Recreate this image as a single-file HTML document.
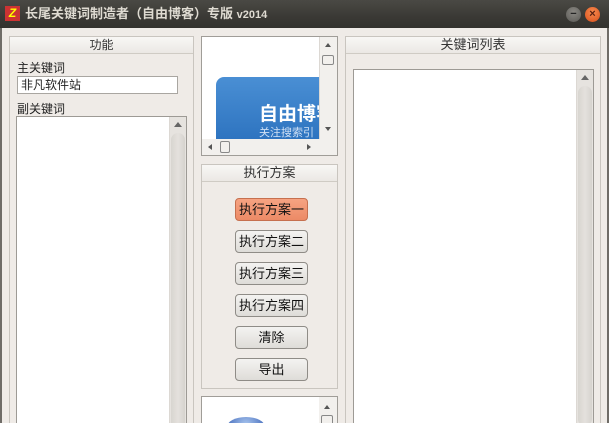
<!DOCTYPE html>
<html style="overflow:hidden;width:609px;height:423px"><head><meta charset="utf-8"><style>
*{margin:0;padding:0;box-sizing:border-box}
body{width:609px;height:423px;overflow:hidden;background:#efebe7;font-family:"Liberation Sans","Noto Sans CJK SC",sans-serif;font-size:12px;color:#222;position:relative}
.a{position:absolute}
.title{left:0;top:0;width:609px;height:28px;background:linear-gradient(#4a4944,#3a3935 60%,#33322e);color:#dfdbd2;font-weight:bold;font-size:13px;line-height:27px}
.panel{border:1px solid #c9c5bf;background:#efebe7}
.hdr{left:0;top:0;right:0;height:17px;border-bottom:1px solid #cfcbc4;background:linear-gradient(#f8f7f5,#ebe8e4);text-align:center;line-height:16px;color:#333}
.box{background:#fff;border:1px solid #9d9a95}
.vs{background:#e6e3df;border-left:1px solid #dcd8d3}
.thumb{background:linear-gradient(90deg,#d8d5d0,#e4e1dd,#d6d3ce);border-radius:8px}
.btn{left:33px;width:73px;height:23px;border:1px solid #8f8c87;border-radius:4px;background:linear-gradient(#f4f3f1,#dedcd8);text-align:center;line-height:21px;font-size:13px;color:#111}
</style></head><body>
<div class="a title"><span class="a" style="left:5px;top:6px;width:15px;height:15px;background:#c33;color:#ff0;font-size:12px;line-height:15px;text-align:center;font-style:italic">Z</span><span class="a" style="left:25px;top:0">长尾关键词制造者（自由博客）专版 <span style="font-size:11px">v2014</span></span>
<span class="a" style="left:566px;top:7px;width:15px;height:15px;border-radius:50%;background:radial-gradient(circle at 50% 35%,#8a8883,#5a5955);color:#222;font-size:11px;line-height:14px;text-align:center">−</span>
<span class="a" style="left:585px;top:7px;width:15px;height:15px;border-radius:50%;background:radial-gradient(circle at 50% 35%,#f88a4e,#d8501c);color:#5a2010;font-size:11px;line-height:14px;text-align:center">×</span></div>
<div class="a" style="left:0;top:28px;width:2px;height:395px;background:#6f6c67"></div>
<div class="a" style="left:607px;top:28px;width:2px;height:395px;background:#6f6c67"></div>

<div class="a panel" style="left:9px;top:36px;width:185px;height:387px;border-bottom:0">
<div class="a hdr">功能</div>
<div class="a" style="left:7px;top:22px;font-size:12px">主关键词</div>
<div class="a box" style="left:7px;top:39px;width:161px;height:18px;padding-left:3px;line-height:16px;font-size:12px;border-color:#a9a6a1">非凡软件站</div>
<div class="a" style="left:7px;top:63px">副关键词</div>
<div class="a box" style="left:6px;top:79px;width:171px;height:308px;border-bottom:0"><div class="a vs" style="right:0;top:0;width:17px;height:308px"><div class="a" style="left:4px;top:5px;border:4px solid transparent;border-bottom:5px solid #666;border-top:0"></div><div class="a thumb" style="left:1px;top:16px;width:14px;height:300px"></div></div></div>
</div>

<div class="a box" style="left:201px;top:36px;width:137px;height:120px;border-color:#a09d98">
<div class="a" style="left:14px;top:40px;width:104px;height:62px;background:linear-gradient(#4a8fd4,#2e74c0);border-radius:8px 0 0 0;overflow:hidden;color:#fff"><div class="a" style="left:43px;top:22px;font-size:19px;font-weight:bold;white-space:nowrap">自由博客</div><div class="a" style="left:43px;top:47px;font-size:11px;color:#cfe0f4;white-space:nowrap">关注搜索引</div></div>
<div class="a vs" style="left:117px;top:0;width:18px;height:102px;background:#f2f0ed"><div class="a" style="left:5px;top:6px;border:3px solid transparent;border-bottom:4px solid #555;border-top:0"></div><div class="a" style="left:2px;top:18px;width:12px;height:10px;border:1px solid #888;border-radius:2px"></div><div class="a" style="left:5px;top:90px;border:3px solid transparent;border-top:4px solid #555;border-bottom:0"></div></div>
<div class="a" style="left:0;top:102px;width:135px;height:16px;background:#f2f0ed"><div class="a" style="left:6px;top:5px;border:3px solid transparent;border-right:4px solid #555;border-left:0"></div><div class="a" style="left:18px;top:2px;width:10px;height:12px;border:1px solid #888;border-radius:2px"></div><div class="a" style="left:105px;top:5px;border:3px solid transparent;border-left:4px solid #555;border-right:0"></div></div>
</div>

<div class="a panel" style="left:201px;top:164px;width:137px;height:225px">
<div class="a hdr" style="font-size:13px">执行方案</div>
<div class="a btn" style="top:33px;background:linear-gradient(#f6a382,#ec8a66);border-color:#c6704f">执行方案一</div>
<div class="a btn" style="top:65px">执行方案二</div>
<div class="a btn" style="top:97px">执行方案三</div>
<div class="a btn" style="top:129px">执行方案四</div>
<div class="a btn" style="top:161px">清除</div>
<div class="a btn" style="top:193px">导出</div>
</div>

<div class="a box" style="left:201px;top:396px;width:137px;height:27px;border-color:#a09d98;border-bottom:0;overflow:hidden">
<div class="a" style="left:25px;top:20px;width:38px;height:20px;border-radius:50%;background:radial-gradient(circle at 50% 40%,#a9c6ef,#3a62b6)"></div>
<div class="a" style="left:117px;top:0;width:18px;height:27px;background:#f2f0ed"><div class="a" style="left:5px;top:8px;border:3px solid transparent;border-bottom:4px solid #555;border-top:0"></div><div class="a" style="left:2px;top:18px;width:12px;height:10px;border:1px solid #888;border-radius:2px"></div></div>
</div>

<div class="a panel" style="left:345px;top:36px;width:256px;height:387px;border-bottom:0">
<div class="a hdr" style="font-size:13px">关键词列表</div>
<div class="a box" style="left:7px;top:32px;width:241px;height:355px;border-bottom:0"><div class="a vs" style="right:0;top:0;width:17px;height:355px"><div class="a" style="left:4px;top:5px;border:4px solid transparent;border-bottom:5px solid #666;border-top:0"></div><div class="a thumb" style="left:1px;top:16px;width:14px;height:340px"></div></div></div>
</div>
</body></html>
